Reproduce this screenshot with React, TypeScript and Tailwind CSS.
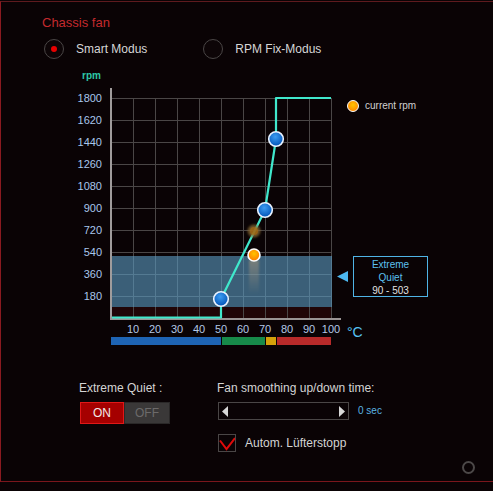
import React from "react";

const rpmLabels = [1800, 1620, 1440, 1260, 1080, 900, 720, 540, 360, 180];
const tempLabels = [10, 20, 30, 40, 50, 60, 70, 80, 90, 100];

// plot coordinates: the y axis sits at x=1, 22px per grid step
const gx = (i: number) => 1.5 + 22 * i;
const gy = (j: number) => 14.5 + 22 * j;

const FanCurve = () => {
  return (
    <svg width="227" height="238" className="overflow-visible block">
      <defs>
        <radialGradient id="bluePoint" cx="45%" cy="35%" r="65%">
          <stop offset="0%" stopColor="#3c9cf2" />
          <stop offset="100%" stopColor="#0052b6" />
        </radialGradient>
        <radialGradient id="orangePoint" cx="50%" cy="40%" r="60%">
          <stop offset="0%" stopColor="#ffc400" />
          <stop offset="100%" stopColor="#ff7800" />
        </radialGradient>
        <linearGradient id="trail" x1="0" y1="0" x2="0" y2="1">
          <stop offset="0%" stopColor="#b8a080" stopOpacity="0.5" />
          <stop offset="100%" stopColor="#b8a080" stopOpacity="0" />
        </linearGradient>
        <filter id="soft" x="-50%" y="-50%" width="200%" height="200%">
          <feGaussianBlur stdDeviation="1.2" />
        </filter>
      </defs>

      {/* 0-90 rpm stop zone */}
      <rect x="2" y="223" width="220" height="11" fill="#200507" />

      {/* grid */}
      {Array.from({ length: 10 }, (_, i) => (
        <line key={"v" + i} x1={gx(i + 1)} y1="14" x2={gx(i + 1)} y2="234" stroke="#4a4646" strokeWidth="1" />
      ))}
      {Array.from({ length: 10 }, (_, j) => (
        <line key={"h" + j} x1="2" y1={gy(j)} x2="221" y2={gy(j)} stroke="#4a4646" strokeWidth="1" />
      ))}

      {/* extreme quiet band 90 - 503 rpm */}
      <rect x="2" y="172" width="220" height="51" fill="#5c9dc4" fillOpacity="0.6" />

      {/* axes */}
      <line x1="1" y1="4" x2="1" y2="236" stroke="#a09c9c" strokeWidth="2" />
      <line x1="0" y1="235" x2="231" y2="235" stroke="#9a9494" strokeWidth="2" />

      {/* curve */}
      <path
        d="M2 233.5 H111 V215 L155 126 L166 55 V14 H221"
        fill="none"
        stroke="#40e8cc"
        strokeWidth="2.2"
        strokeLinejoin="round"
      />

      {/* current rpm with fading history */}
      <rect x="139" y="176" width="10" height="34" fill="url(#trail)" filter="url(#soft)" />
      <circle cx="144" cy="147" r="6.5" fill="#8a6a30" fillOpacity="0.75" filter="url(#soft)" />
      <circle cx="144" cy="147" r="4" fill="#a86a10" fillOpacity="0.7" />
      <circle cx="144" cy="171" r="6" fill="url(#orangePoint)" stroke="#ffffff" strokeWidth="1.6" />

      {/* curve points */}
      {[
        [111, 215],
        [155, 126],
        [166, 55],
      ].map(([x, y]) => (
        <circle key={x} cx={x} cy={y} r="7.3" fill="url(#bluePoint)" stroke="#e8f2ff" strokeWidth="1.6" />
      ))}
    </svg>
  );
};

const Radio = ({ checked, label }: { checked?: boolean; label: string }) => (
  <div className="flex items-center">
    <div className="w-[20px] h-[20px] rounded-full border-[1.5px] border-[#4a4646] bg-[#0d0507] flex items-center justify-center">
      {checked && <div className="w-[6px] h-[6px] rounded-full bg-[#e80000]" />}
    </div>
    <span className="ml-[12px] text-[12px] leading-[16px] text-[#d6d6d6]">{label}</span>
  </div>
);

export default function App() {
  return (
    <div className="w-[493px] h-[491px] bg-[#0a0305] overflow-hidden pt-px" style={{ fontFamily: '"Liberation Sans", Arial, sans-serif' }}>
      <div className="h-[481px] border-l border-t border-b border-l-[#8a1a20] border-t-[#5e1a1e] border-b-[#7a161c] flex flex-col">
        <div className="pt-[13px] pl-[41px] text-[13px] leading-[16px] text-[#c42a2e]">Chassis fan</div>

        <div className="mt-[8px] flex items-center pl-[43px]">
          <Radio checked label="Smart Modus" />
          <div className="ml-[56px]">
            <Radio label="RPM Fix-Modus" />
          </div>
        </div>

        <div className="mt-[9px] h-[16px] pl-[81px] text-[10px] leading-[16px] font-bold text-[#2ec8a8]">rpm</div>

        <div className="flex">
          <div className="w-[101px] pt-[3px] flex flex-col items-end">
            {rpmLabels.map((v) => (
              <div key={v} className="h-[22px] text-[11px] leading-[22px] text-[#a9c6ec]">
                {v}
              </div>
            ))}
          </div>
          <div className="ml-[8px]">
            <FanCurve />
          </div>
          <div className="flex flex-col">
            <div className="mt-[16px] ml-[10px] flex items-center">
              <div className="w-[12px] h-[12px] rounded-full border-[1.5px] border-white bg-[radial-gradient(circle_at_50%_40%,#ffc400,#ff7800)]" />
              <span className="ml-[6px] text-[10px] leading-[12px] text-[#d0d0d0]">current rpm</span>
            </div>
            <div className="mt-[144px] flex items-center">
              <svg width="11" height="11" className="block">
                <path d="M0 5.5 L11 0 V11 Z" fill="#4cb8f0" />
              </svg>
              <div className="ml-[5px] w-[75px] h-[41px] border border-[#4fb4e6] pt-px flex flex-col items-center text-[10px] leading-[13px]">
                <span className="text-[#5cc0f0]">Extreme</span>
                <span className="text-[#5cc0f0]">Quiet</span>
                <span className="text-[#e2e2e2]">90 - 503</span>
              </div>
            </div>
          </div>
        </div>

        <div className="flex h-[15px] pl-[121px]">
          {tempLabels.map((t) => (
            <div key={t} className="w-[22px] text-center text-[11px] leading-[15px] text-[#b4c8e6]">
              {t}
            </div>
          ))}
          <div className="ml-[5px] mt-[3px] text-[14px] leading-[15px] text-[#58c4f4]">°C</div>
        </div>

        <div className="flex h-[8px] ml-[110px] gap-px">
          <div className="w-[110px] bg-[#1e64b4]" />
          <div className="w-[43px] bg-[#178a4a]" />
          <div className="w-[10px] bg-[#d4a00a]" />
          <div className="w-[54px] bg-[#b82a2a]" />
        </div>

        <div className="mt-[35px] flex">
          <div className="ml-[78px] w-[138px] flex flex-col">
            <div className="text-[12px] leading-[16px] text-[#d4d4d4]">Extreme Quiet :</div>
            <div className="mt-[6px] flex h-[22px] ml-px">
              <div className="w-[44px] bg-[#a50000] border border-[#e01818] flex items-center justify-center text-[12px] text-[#f2e8e8]">ON</div>
              <div className="w-[46px] bg-[#3a3838] border border-[#2a2828] flex items-center justify-center text-[12px] text-[#6c6a6a]">OFF</div>
            </div>
          </div>

          <div className="flex flex-col">
            <div className="text-[12px] leading-[16px] text-[#d4d4d4]">Fan smoothing up/down time:</div>
            <div className="mt-[6px] flex items-center">
              <div className="ml-px w-[131px] h-[18px] border border-[#4a4646] flex items-center justify-between px-[3px]">
                <svg width="6" height="11" className="block">
                  <path d="M0 5.5 L6 0 V11 Z" fill="#d8d8d8" />
                </svg>
                <svg width="6" height="11" className="block">
                  <path d="M6 5.5 L0 0 V11 Z" fill="#d8d8d8" />
                </svg>
              </div>
              <span className="ml-[9px] text-[10px] leading-[12px] text-[#5ab4e2]">0 sec</span>
            </div>
            <div className="mt-[14px] flex items-center">
              <div className="ml-px w-[18px] h-[18px] border border-[#4a4646]">
                <svg width="16" height="16" className="block">
                  <path d="M1 5.5 L7.5 14 L16 3" fill="none" stroke="#e00a0a" strokeWidth="2" />
                </svg>
              </div>
              <span className="ml-[9px] text-[12px] leading-[16px] text-[#d4d4d4]">Autom. Lüfterstopp</span>
            </div>
          </div>
        </div>

        <div className="mt-[9px] flex justify-end pr-[18px]">
          <div className="w-[13px] h-[13px] rounded-full border-2 border-[#4c4848]" />
        </div>
      </div>
    </div>
  );
}
